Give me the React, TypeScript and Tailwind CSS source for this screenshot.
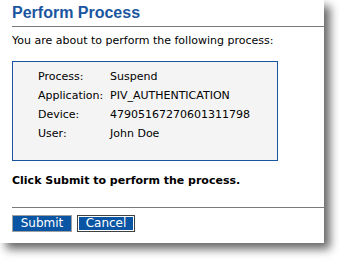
export default function App() {
  const rows: [string, string][] = [
    ['Process:', 'Suspend'],
    ['Application:', 'PIV_AUTHENTICATION'],
    ['Device:', '47905167270601311798'],
    ['User:', 'John Doe'],
  ];

  return (
    <div className="w-[340px] h-[261px] bg-white">
      <div
        className="w-[324px] h-[243px] bg-white shadow-[6px_6px_9px_rgba(0,0,0,0.6)] pl-3 text-[11px] text-black"
        style={{ fontFamily: '"DejaVu Sans", Verdana, sans-serif' }}
      >
        <h1
          className="pt-[3px] h-[26px] text-[16px] font-bold leading-[20px] text-[#1a56a0]"
          style={{ fontFamily: '"Liberation Sans", Arial, sans-serif' }}
        >
          Perform Process
        </h1>
        <div className="border-t border-[#7a7a7a]" />
        <p className="mt-[7px] leading-[14px]">You are about to perform the following process:</p>

        <div className="mt-[13px] w-[266px] h-[100px] border border-[#1a56a0] bg-[#f4f4f4] pl-[25px] pt-[6px]">
          {rows.map(([k, v]) => (
            <div key={k} className="flex h-[19px] items-center">
              <span className="w-[72px]">{k}</span>
              <span>{v}</span>
            </div>
          ))}
        </div>

        <p className="mt-[13px] font-bold leading-[14px]">Click Submit to perform the process.</p>
        <div className="mt-[19px] border-t border-[#7a7a7a]" />

        <div className="mt-[7px] flex gap-[5px]">
          <button className="h-[17px] w-[60px] border border-[#a0a0a0] bg-[#0a55a3] text-white text-[12px] leading-[15px]">
            Submit
          </button>
          <button className="h-[17px] w-[58px] border border-[#404040] bg-[#0a55a3] text-white text-[12px] leading-[13px] outline outline-1 -outline-offset-2 outline-white">
            Cancel
          </button>
        </div>
      </div>
    </div>
  );
}
